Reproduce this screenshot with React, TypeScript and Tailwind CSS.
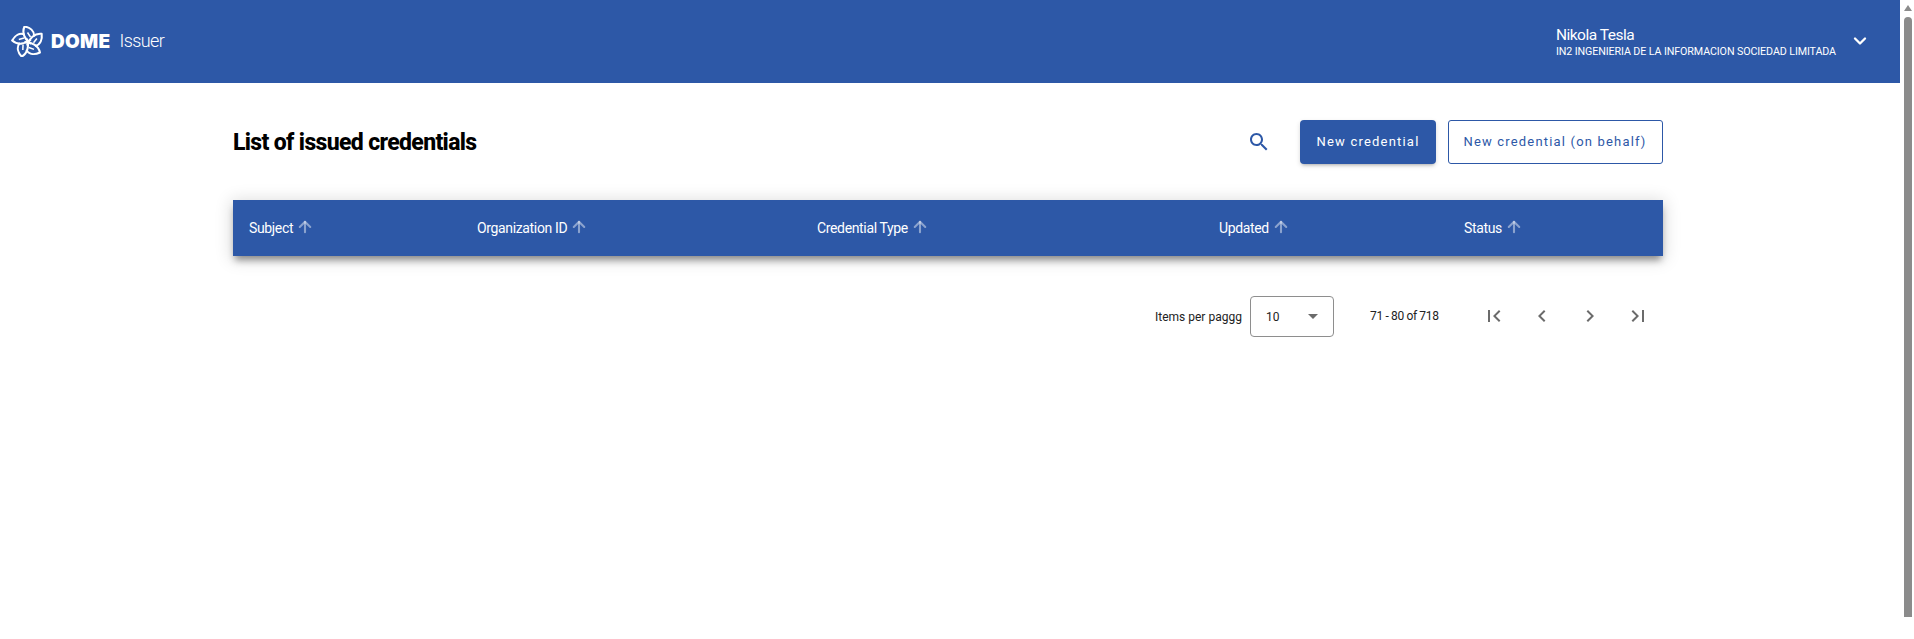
import React from "react";
import { ChevronDown, ArrowUp } from "lucide-react";

const font = "font-['Roboto',sans-serif]";

function Logo() {
  return (
    <svg width="34" height="31" viewBox="-17 -16 34 31" fill="none" stroke="#fff" strokeWidth="2.1" strokeLinejoin="round">
      {[0, 72, 144, 216, 288].map((a) => (
        <g key={a} transform={`rotate(${a})`}>
          <path d="M3 2 C-3 -2 -6.5 -9 -3.5 -15.5 C2 -14.5 6.5 -11 6 -5.5" />
          <path d="M-0.5 -9.5 L2.5 -5" strokeWidth="1.5" />
        </g>
      ))}
    </svg>
  );
}

function Th({ label }: { label: string }) {
  return (
    <div className="flex items-center gap-[3px] pl-4 text-[14px] tracking-[-0.35px] text-white">
      <span>{label}</span>
      <ArrowUp size={18} strokeWidth={2.8} className="mb-[2px] text-white/45" />
    </div>
  );
}

function Mi({ d }: { d: string }) {
  return (
    <span className="flex w-[48px] justify-center">
      <svg width="24" height="24" viewBox="0 0 24 24" fill="#6b6b6b">
        <path d={d} />
      </svg>
    </span>
  );
}

export default function App() {
  return (
    <div className={`flex h-[639px] w-[1914px] overflow-hidden bg-white ${font}`}>
      <div className="w-[1900px] shrink-0">
        <header className="flex h-[83px] items-center justify-between bg-[#2d58a7] pl-[11px] pr-[30px] text-white">
          <div className="flex items-center">
            <Logo />
            <span className="mb-[1px] ml-[6px] font-['Inter',sans-serif] text-[19px] font-black leading-none tracking-[0.3px]">DOME</span>
            <span className="mb-[1px] ml-[9px] text-[18px] font-light leading-none tracking-[-0.6px]">Issuer</span>
          </div>
          <div className="flex items-center">
            <div className="flex flex-col">
              <span className="text-[15.5px] leading-[20px] tracking-[-0.5px]">Nikola Tesla</span>
              <span className="text-[10.7px] leading-[14px] tracking-[-0.1px]">IN2 INGENIERIA DE LA INFORMACION SOCIEDAD LIMITADA</span>
            </div>
            <ChevronDown size={20} strokeWidth={2.8} className="mb-[1px] ml-[14px]" />
          </div>
        </header>

        <main className="mx-[233px] w-[1430px]">
          <div className="flex h-[117px] items-center justify-between">
            <h1 className="mt-[2px] text-[23px] font-extrabold leading-none tracking-[-0.65px] text-black">List of issued credentials</h1>
            <div className="flex items-center">
              <svg width="24" height="24" viewBox="0 0 24 24" fill="#2d58a7" className="mr-[29px]">
                <path d="M15.5 14h-.79l-.28-.27C15.41 12.59 16 11.11 16 9.5 16 5.91 13.09 3 9.5 3S3 5.91 3 9.5 5.91 16 9.5 16c1.61 0 3.09-.59 4.23-1.57l.27.28v.79l5 4.99L20.49 19l-4.99-5zm-6 0C7.01 14 5 11.99 5 9.5S7.01 5 9.5 5 14 7.01 14 9.5 11.99 14 9.5 14z" />
              </svg>
              <button className="h-[44px] w-[136px] rounded-[4px] bg-[#2d58a7] pt-[1px] text-[13px] tracking-[1.2px] text-white shadow-[0_3px_3px_-2px_rgba(0,0,0,0.2),0_2px_5px_0_rgba(0,0,0,0.14)]">
                New credential
              </button>
              <button className="ml-[12px] h-[44px] w-[215px] rounded-[3px] border border-[#2d58a7] bg-white pr-[1px] pt-[1px] text-[13px] tracking-[1.18px] text-[#2d58a7]">
                New credential (on behalf)
              </button>
            </div>
          </div>

          <div className="grid h-[56px] grid-cols-[228px_340px_402px_245px_215px] items-center bg-[#2d58a7] shadow-[0_6px_7px_-2px_rgba(0,0,0,0.4),0_2px_16px_2px_rgba(0,0,0,0.14)]">
            <Th label="Subject" />
            <Th label="Organization ID" />
            <Th label="Credential Type" />
            <Th label="Updated" />
            <Th label="Status" />
          </div>

          <div className="mt-[40px] flex h-[41px] items-center text-[12px] text-[#222]">
            <span className="ml-[922px] w-[95px]">Items per paggg</span>
            <div className="flex h-[41px] w-[84px] items-center justify-between rounded-[4px] border border-[#8e8e8e] pl-[15px] pr-[15px]">
              <span>10</span>
              <span className="h-0 w-0 border-x-[5px] border-t-[5px] border-x-transparent border-t-[#6b6b6b]" />
            </div>
            <span className="mb-[2px] ml-[36px] w-[100px] tracking-[-0.35px]">71 - 80 of 718</span>
            <div className="mb-[2px] flex items-center">
              <Mi d="M18.41 16.59 13.82 12l4.59-4.59L17 6l-6 6 6 6zM6 6h2v12H6z" />
              <Mi d="M15.41 7.41 14 6l-6 6 6 6 1.41-1.41L10.83 12z" />
              <Mi d="M10 6 8.59 7.41 13.17 12l-4.58 4.59L10 18l6-6z" />
              <Mi d="M5.59 7.41 10.18 12l-4.59 4.59L7 18l6-6-6-6zM16 6h2v12h-2z" />
            </div>
          </div>
        </main>
      </div>

      <div className="flex w-[14px] shrink-0 flex-col items-center bg-white pt-[5px] pl-[1px]">
        <span className="h-0 w-0 border-x-[4.5px] border-b-[6px] border-x-transparent border-b-[#8b8b8b]" />
        <div className="mt-[6px] h-[600px] w-[8px] rounded-t-[4px] bg-[#8b8b8b]" />
      </div>
    </div>
  );
}
